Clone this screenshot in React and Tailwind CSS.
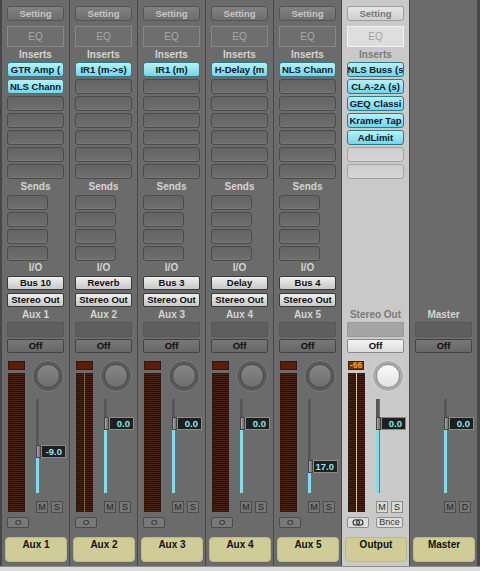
import React from "react";

const auxStrips = [
  { name: "Aux 1", inserts: ["GTR Amp (", "NLS Chann"], io: ["Bus 10", "Stereo Out"], meter: "mono", value: "-9.0", pos: 46 },
  { name: "Aux 2", inserts: ["IR1 (m->s)"], io: ["Reverb", "Stereo Out"], meter: "stereo", value: "0.0", pos: 18 },
  { name: "Aux 3", inserts: ["IR1 (m)"], io: ["Bus 3", "Stereo Out"], meter: "mono", value: "0.0", pos: 18 },
  { name: "Aux 4", inserts: ["H-Delay (m"], io: ["Delay", "Stereo Out"], meter: "mono", value: "0.0", pos: 18 },
  { name: "Aux 5", inserts: ["NLS Chann"], io: ["Bus 4", "Stereo Out"], meter: "mono", value: "17.0", pos: 61 },
];

const outputInserts = ["NLS Buss (s", "CLA-2A (s)", "GEQ Classi", "Kramer Tap", "AdLimit"];

const btn = "flex items-center justify-center font-bold leading-none whitespace-nowrap overflow-hidden";

const Label = ({ text, light, h }) => (
  <div
    className={
      (h === 16 ? "h-[16px] " : h === 14 ? "h-[14px] " : "h-[15px] ") +
      (light ? "text-[#7b7b7b] " : "text-[#d3d3d3] ") +
      "flex items-center justify-center text-[10px] font-bold leading-none"
    }
  >
    {text}
  </div>
);

const Slot = ({ text, light }) => {
  if (text) {
    return (
      <div className={btn + " h-[15px] mx-[5px] rounded-[3px] border border-[#2d7a8d] bg-linear-to-b from-[#b6f1fa] to-[#74d5e9] text-[#0b1926] text-[9.5px] px-[1px]"}>
        {text}
      </div>
    );
  }
  return (
    <div
      className={
        light
          ? "h-[15px] mx-[5px] rounded-[3px] border border-[#a3a3a3] bg-linear-to-b from-[#cdcdcd] to-[#d6d6d6]"
          : "h-[15px] mx-[5px] rounded-[3px] border border-[#4b4b4b] bg-linear-to-b from-[#646464] to-[#6e6e6e] shadow-[inset_0_-1px_0_#777]"
      }
    />
  );
};

const Knob = ({ light }) => (
  <div
    className={
      light
        ? "w-[32px] h-[32px] rounded-full bg-[#a9a9a9] border border-[#dadada] flex items-center justify-center"
        : "w-[32px] h-[32px] rounded-full bg-[#595959] border border-[#7c7c7c] flex items-center justify-center"
    }
  >
    <div
      className={
        light
          ? "w-[24px] h-[24px] rounded-full bg-linear-to-b from-[#fbfbfb] to-[#e2e2e2] border border-[#8e8e8e]"
          : "w-[24px] h-[24px] rounded-full bg-linear-to-b from-[#878787] to-[#6e6e6e] border border-[#4a4a4a]"
      }
    />
  </div>
);

const meterBar =
  "h-[139px] border border-[#2e1a12] bg-[repeating-linear-gradient(to_bottom,#4a2415_0px,#4a2415_1px,#22110a_1px,#22110a_2px)]";

const Meter = ({ type }) =>
  type === "stereo" ? (
    <div className="mt-[3px] flex gap-[1px]">
      <div className={meterBar + " w-[8px]"} />
      <div className={meterBar + " w-[8px]"} />
    </div>
  ) : (
    <div className={meterBar + " mt-[3px] w-[17px]"} />
  );

const Fader = ({ value, pos }) => (
  <div className="relative ml-[4px] mt-[7px] h-[94px] w-[30px]">
    <div className="w-[4px] h-full flex flex-col justify-end bg-[#575757] border-r border-[#6f6f6f]">
      <div className="bg-[#85dbee]" style={{ height: 94 - pos - 13 }} />
    </div>
    <div className="absolute left-0 w-[30px] h-[13px] flex" style={{ top: pos }}>
      <div className="w-[5px] h-full bg-linear-to-r from-[#a9a9a9] to-[#6d6d6d] border border-[#444]" />
      <div className="flex-1 h-full bg-[#1f1f1f] border border-[#8a8a8a] flex items-center justify-end pr-[3px] text-[#8fe6f8] text-[9.5px] font-bold leading-none">
        {value}
      </div>
    </div>
  </div>
);

const SmallBtn = ({ text, light }) => (
  <div
    className={
      btn +
      (light
        ? " w-[12px] h-[12px] border border-[#8c8c8c] bg-[#d9d9d9] text-[#2a2a2a] text-[9px] font-normal"
        : " w-[12px] h-[12px] border border-[#4c4c4c] bg-[#767676] text-[#262626] text-[9px] font-normal")
    }
  >
    {text}
  </div>
);

const Strip = ({ kind, data }) => {
  const light = kind === "output";
  const master = kind === "master";
  const aux = kind === "aux";
  const hideTop = master ? " invisible" : "";

  return (
    <div
      className={
        (light ? "bg-[#c9c9c9] " : "bg-[#6b6b6b] ") +
        "w-[68px] h-[566px] border-r border-[#484848] flex flex-col pt-[6px]"
      }
    >
      <div className={"flex flex-col" + hideTop}>
        <div
          className={
            btn +
            (light
              ? " h-[15px] mx-[5px] rounded-[3px] border border-[#9d9d9d] bg-linear-to-b from-[#e6e6e6] to-[#cfcfcf] text-[#777] text-[9.5px]"
              : " h-[15px] mx-[5px] rounded-[3px] border border-[#545454] bg-linear-to-b from-[#828282] to-[#6d6d6d] text-[#c6c6c6] text-[9.5px]")
          }
        >
          Setting
        </div>
        <div
          className={
            light
              ? "mt-[5px] h-[21px] mx-[5px] border border-[#f2f2f2] bg-[#dedede] flex items-center justify-center text-[10px] text-[#a2a2a2] leading-none"
              : "mt-[5px] h-[21px] mx-[5px] border border-[#878787] bg-[#6e6e6e] flex items-center justify-center text-[10px] text-[#a8a8a8] leading-none"
          }
        >
          EQ
        </div>
        <Label text="Inserts" light={light} />
        <div className="flex flex-col gap-[2px]">
          {Array.from({ length: 7 }).map((_, i) => {
            const list = light ? outputInserts : aux ? data.inserts : [];
            return <Slot key={i} text={list[i]} light={light} />;
          })}
        </div>
      </div>

      <div className={"flex flex-col" + (aux ? "" : " invisible")}>
        <Label text="Sends" h={16} />
        <div className="flex flex-col gap-[2px]">
          {[0, 1, 2, 3].map((i) => (
            <div
              key={i}
              className="h-[15px] w-[41px] ml-[5px] rounded-[3px] border border-[#4b4b4b] bg-linear-to-b from-[#646464] to-[#6e6e6e] shadow-[inset_0_-1px_0_#777]"
            />
          ))}
        </div>
        <Label text="I/O" h={14} />
        {(aux ? data.io : ["", ""]).map((t, i) => (
          <div
            key={i}
            className={
              btn +
              (i === 0 ? " mt-[1px]" : " mt-[3px]") +
              " h-[14px] mx-[5px] rounded-[2px] border border-[#3a3a3a] bg-linear-to-b from-[#efefef] to-[#c8c8c8] text-[#111] text-[9.5px]"
            }
          >
            {t}
          </div>
        ))}
      </div>

      <Label text={aux ? data.name : light ? "Stereo Out" : "Master"} light={light} />
      <div
        className={
          light
            ? "h-[15px] mx-[5px] bg-[#a4a4a4] border border-[#9b9b9b]"
            : "h-[15px] mx-[5px] bg-[#5e5e5e] border border-[#585858]"
        }
      />
      <div
        className={
          btn +
          (light
            ? " mt-[2px] h-[14px] mx-[5px] rounded-[2px] border border-[#8a8a8a] bg-linear-to-b from-[#f4f4f4] to-[#dcdcdc] text-[#0e0e0e] text-[9.5px]"
            : " mt-[2px] h-[14px] mx-[5px] rounded-[2px] border border-[#444] bg-linear-to-b from-[#777] to-[#676767] text-[#0e0e0e] text-[9.5px]")
        }
      >
        Off
      </div>

      <div className="mt-[7px] flex h-[153px]">
        <div className={"ml-[6px] w-[17px] flex flex-col" + (master ? " invisible" : "")}>
          {light ? (
            <div className={btn + " mt-[1px] h-[9px] w-[16px] bg-[#6b3411] border border-[#3c1e0c] text-[#ffa12f] text-[8.5px]"}>
              -66
            </div>
          ) : (
            <div className="mt-[1px] h-[9px] w-[17px] bg-[#5b1c09] border border-[#2f1a11]" />
          )}
          <Meter type={light ? "stereo" : master ? "mono" : data.meter} />
        </div>
        <div className="ml-[7px] w-[34px] flex flex-col">
          <div className={master ? "invisible" : ""}>
            <Knob light={light} />
          </div>
          <Fader value={master || light ? "0.0" : data.value} pos={master || light ? 18 : data.pos} />
          <div className="mt-[8px] ml-[4px] flex gap-[3px]">
            <SmallBtn text="M" light={light} />
            <SmallBtn text={master ? "D" : "S"} light={light} />
          </div>
        </div>
      </div>

      <div className={"mt-[4px] h-[11px] flex" + (master ? " invisible" : "")}>
        <div
          className={
            light
              ? "ml-[5px] w-[22px] h-[11px] rounded-[2px] border border-[#8e8e8e] bg-[#dedede] flex items-center justify-center"
              : "ml-[5px] w-[22px] h-[11px] rounded-[2px] border border-[#4b4b4b] bg-[#787878] flex items-center justify-center text-[8px] text-[#222] leading-none"
          }
        >
          {light ? (
            <svg width="12" height="7" viewBox="0 0 12 7">
              <ellipse cx="4.2" cy="3.5" rx="3.2" ry="2.7" fill="none" stroke="#333" strokeWidth="1.1" />
              <ellipse cx="7.8" cy="3.5" rx="3.2" ry="2.7" fill="none" stroke="#333" strokeWidth="1.1" />
            </svg>
          ) : (
            "O"
          )}
        </div>
        {light && (
          <div className={btn + " ml-[7px] w-[27px] h-[11px] rounded-[2px] border border-[#8e8e8e] bg-[#dedede] text-[#333] text-[9px] font-normal"}>
            Bnce
          </div>
        )}
      </div>

      <div className="mt-[9px] ml-[3px] w-[62px] h-[25px] rounded-[4px] bg-[#d0cc97] border border-[#bdb985] text-[#111] text-[10px] font-bold text-center pt-[1px] leading-[12px]">
        {aux ? data.name : light ? "Output" : "Master"}
      </div>
    </div>
  );
};

const App = () => {
  return (
    <div className="w-[480px] h-[571px] flex flex-col bg-[#6b6b6b] font-['Liberation_Sans',Arial,sans-serif] select-none">
      <div className="flex h-[566px] border-l-2 border-r-2 border-[#474747]">
        {auxStrips.map((s) => (
          <Strip key={s.name} kind="aux" data={s} />
        ))}
        <Strip kind="output" />
        <Strip kind="master" />
      </div>
      <div className="h-[5px] bg-[#dcdcdc] border-t border-[#8c8c8c]" />
    </div>
  );
};

export default App;
